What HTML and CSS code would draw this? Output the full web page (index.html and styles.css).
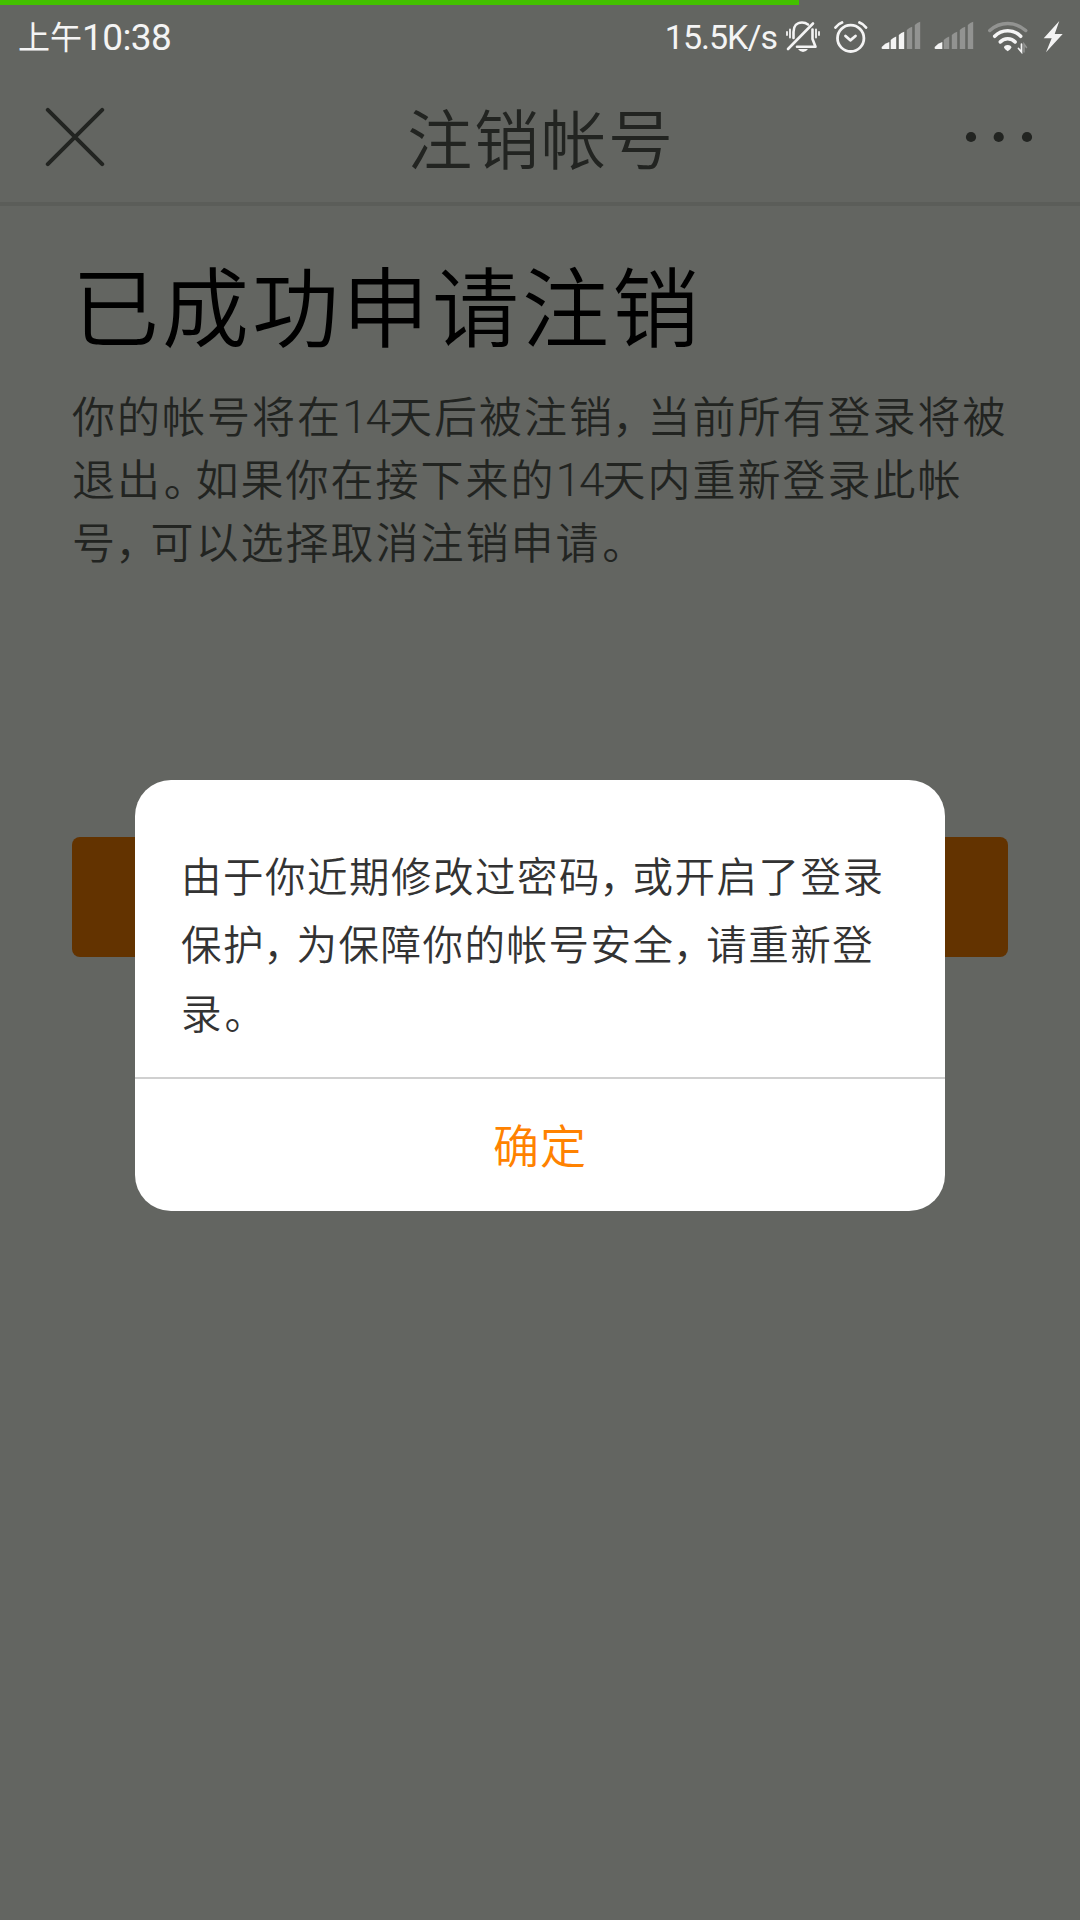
FILE: index.html
```html
<!DOCTYPE html>
<html lang="zh-CN">
	<head>
		<meta charset="utf-8">
		<title>注销帐号</title>
		<meta name="viewport" content="width=device-width, initial-scale=1" />
		<link rel="stylesheet" href="styles.css">
	</head>
	<body>
		<div class="Progress"></div>

		<div class="StatusBar">
			<div class="Time"><span class="Meridiem">上午</span>10:38</div>
			<div class="StatusIcons">
				<span class="Speed">15.5K/s</span>
				<!-- muted bell -->
				<svg class="Mute" width="34" height="36" viewBox="0 0 34 36" fill="none" stroke="currentColor" stroke-width="2.6" stroke-linecap="round" stroke-linejoin="round">
					<path d="M7.5 20V14C7.5 8 11 4.5 16 4.5C18.500 4.500 20.500 5.300 22 6.500M26.500 11.500V21L29.500 28.700H11" />
					<path d="M2 31L27 5.500" />
					<path d="M1 14V17M4 11.500V19.500M30 11.500V19.500M33 14V17" stroke-width="1.800" />
					<path d="M12 31H22Q20 34 17 34T12 31Z" fill="currentColor" stroke="none" />
				</svg>
				<!-- alarm clock -->
				<svg class="Alarm" width="34" height="36" viewBox="0 0 34 36" fill="none" stroke="currentColor" stroke-width="2.8" stroke-linecap="round" stroke-linejoin="round">
					<circle cx="16.700" cy="20.300" r="13.200" />
					<path d="M1.500 9.500Q4 6 8 4.500M25.500 4.500Q29.500 6 32 9.500" />
					<path d="M11.500 18L16.300 22.300L21.500 18" />
				</svg>
				<svg class="Signal" width="40" height="36" viewBox="0 0 40 36" fill="currentColor">
					<path d="M.7 29Q4 25 8.300 24V31H1.500Q.2 31 .7 29Z" />
					<path d="M9.700 22Q12 19.500 15.200 18.500V31H9.700ZM17.800 17Q20 14.500 23.200 13.700V31H17.800Z" />
					<path class="Weak" d="M25.800 12Q28 9.500 31.200 8.700V31H25.800ZM33.800 7Q36 4.500 39.200 3.700V31H33.800Z" />
				</svg>
				<svg class="Signal" width="40" height="36" viewBox="0 0 40 36" fill="currentColor">
					<path d="M.7 29Q4 25 8.300 24V31H1.500Q.2 31 .7 29Z" />
					<path class="Weak" d="M9.700 22Q12 19.500 15.200 18.500V31H9.700ZM17.800 17Q20 14.500 23.200 13.700V31H17.800ZM25.800 12Q28 9.500 31.200 8.700V31H25.800ZM33.800 7Q36 4.500 39.200 3.700V31H33.800Z" />
				</svg>
				<svg class="Wifi" width="43" height="36" viewBox="0 0 43 36" fill="none" stroke="currentColor" stroke-width="3.5" stroke-linecap="round">
					<path class="WeakLine" d="M2.800 12.500Q10.500 5.500 20.700 5.500T38.700 12.500" />
					<path d="M7.700 18.300Q13 12.800 20.700 12.800T33.700 18.300" />
					<path d="M13.200 24Q16 20.700 20.700 20.700T28.200 24" />
					<path d="M17 29.500Q17 27 20.700 27T24.400 29.500Q24 31 20.700 33.300Q17.400 31 17 29.500Z" fill="currentColor" stroke="none" />
					<path d="M34.500 26V34L31.500 30.500" stroke-width="1.700" />
					<path class="WeakLine" d="M37 34V26L39.500 29.500" stroke-width="1.500" />
				</svg>
				<svg class="Bolt" width="21" height="36" viewBox="0 0 21 36" fill="currentColor">
					<path d="M16.300 3L.7 20.300H8.700L3 34.300L19.700 16H11.700Z" />
				</svg>
			</div>
		</div>

		<header class="NavBar">
			<svg width="60" height="60" viewBox="0 0 60 60" stroke="currentColor" stroke-width="4" stroke-linecap="round">
				<path d="M2.800 2.800L57.200 57.200M57.200 2.800L2.800 57.200" />
			</svg>
			<div class="NavTitle">注销帐号</div>
			<svg width="68" height="12" viewBox="0 0 68 12" fill="currentColor">
				<circle cx="6" cy="6" r="5.100" /><circle cx="33.700" cy="6" r="5.100" /><circle cx="62" cy="6" r="5.100" />
			</svg>
		</header>

		<main>
			<h1>已成功申请注销</h1>
			<p class="Detail">
				你的帐号将在<span class="Num">14</span>天后被注销<span class="Comma">，</span>当前所有登录将被<br>
				退出<span class="Stop">。</span>如果你在接下来的<span class="Num">14</span>天内重新登录此帐<br>
				号<span class="Comma">，</span>可以选择取消注销申请<span class="Stop">。</span>
			</p>
			<div class="MainButton"></div>
		</main>

		<div class="Dialog">
			<p class="Message">
				由于你近期修改过密码<span class="Comma">，</span>或开启了登录<br>
				保护<span class="Comma">，</span>为保障你的帐号安全<span class="Comma">，</span>请重新登<br>
				录<span class="Stop">。</span>
			</p>
			<div class="Confirm">确定</div>
		</div>
	</body>
</html>
```
FILE: styles.css
```css
:root
{
	--dim: #636561;
	--ink: #222421;
	--status: #f4f4f4;
	--orange: #ff8200;
}

*
{
	box-sizing: border-box;
}

body
{
	position: relative;
	margin: 0;
	width: 1080px;
	height: 1920px;
	overflow: hidden;
	background: var(--dim);
	color: var(--ink);
	font-family: "Noto Sans CJK SC", sans-serif;
	font-weight: 350;
}

svg
{
	display: block;
	flex: none;
}

/* sits over the status bar */
.Progress
{
	position: absolute;
	top: 0;
	left: 0;
	width: 799px;
	height: 5px;
	background: #43c000;
}

.StatusBar
{
	display: flex;
	justify-content: space-between;
	align-items: center;
	height: 72px;
	padding: 0 16px 0 18px;
	color: var(--status);
	font-family: Roboto, "Noto Sans CJK SC", sans-serif;
	font-weight: 400;
}

.Time
{
	display: flex;
	align-items: center;
	padding-top: 4px;
	font-size: 37px;
	line-height: 68px;
	letter-spacing: -0.6px;
}

.Meridiem
{
	font-size: 32px;
	letter-spacing: 0;
}

.StatusIcons
{
	display: flex;
	align-items: center;
}

.Speed
{
	padding-top: 3px;
	font-size: 34px;
	line-height: 69px;
	letter-spacing: -1px;
	margin-right: 9px;
}

.Mute	{	margin-right: 14px;	}
.Alarm	{	margin-right: 13px;	}
.Signal	{	margin-right: 13px;	}
.Wifi	{	margin-right: 13px;	}

.Weak		{	fill: #929391;	}
.WeakLine	{	stroke: #929391;	}

.NavBar
{
	display: flex;
	justify-content: space-between;
	align-items: center;
	height: 134px;
	padding: 0 47px 1px 45px;
	border-bottom: 4px solid #5b5d59;
}

.NavTitle
{
	padding-bottom: 2px;
	font-size: 65px;
	line-height: 96px;
	letter-spacing: 1.9px;
	margin-left: 12px;
}

main
{
	padding: 0 72px;
}

h1
{
	margin: 0;
	padding-top: 37px;
	color: #000;
	font-size: 87px;
	font-weight: 350;
	line-height: 120px;
	letter-spacing: 3px;
}

.Detail
{
	margin: 20px -20px 0 0;
	height: 190px;
	font-size: 43px;
	line-height: 63px;
	letter-spacing: 2px;
	white-space: nowrap;
}

.Num
{
	font-family: Roboto, sans-serif;
	font-size: 46px;
	font-weight: 350;
	line-height: 1;
	letter-spacing: -2px;
}

/* half-width marks with a little air around them */
.Comma,
.Stop
{
	font-feature-settings: "halt";
	letter-spacing: 0;
}

.Comma
{
	margin: 0 0.32em 0 -0.04em;
}

.Stop
{
	margin: 0 0.24em 0 0.04em;
}

.MainButton
{
	height: 120px;
	margin-top: 264px;
	border-radius: 8px;
	background: #633300;
}

.Dialog
{
	position: absolute;
	top: 780px;
	left: 135px;
	width: 810px;
	height: 431px;
	border-radius: 36px;
	background: #fff;
}

.Message
{
	margin: 0;
	height: 299px;
	padding: 61px 0 0 46px;
	border-bottom: 2px solid #d0d0d0;
	color: #333;
	font-size: 40.5px;
	line-height: 68.3px;
	letter-spacing: 1.5px;
	white-space: nowrap;
}

.Confirm
{
	color: var(--orange);
	font-size: 46px;
	line-height: 129px;
	letter-spacing: 1px;
	text-align: center;
}
```
